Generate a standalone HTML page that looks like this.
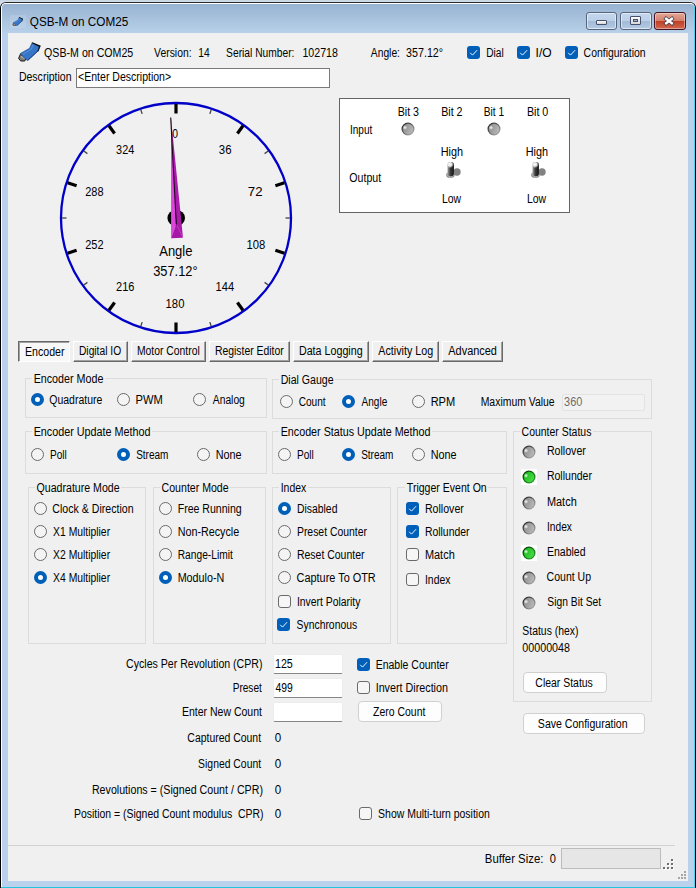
<!DOCTYPE html>
<html lang="en"><head><meta charset="utf-8"><title>QSB-M on COM25</title>
<style>
html,body{margin:0;padding:0}
body{width:696px;height:888px;position:relative;overflow:hidden;background:#d9e1ea;font-family:"Liberation Sans",sans-serif;font-size:12px;color:#000}
.abs{position:absolute}
div,span,i,svg{position:absolute;box-sizing:border-box}
.above{left:0;top:0;width:696px;height:3px;background:linear-gradient(#c9d5e2,#d6e1ee)}
.win{left:0;top:2px;width:696px;height:886px;background:#b9d1ea;border:1px solid #000;border-top-color:#2a2a2a;border-radius:6px 6px 0 0}
.winhi{left:0;top:0;right:0;bottom:0;border:1px solid #fff;border-radius:5px 5px 0 0;border-bottom:none;border-right:none}
.title{left:1px;top:1px;right:1px;height:30px;background:linear-gradient(#98b3d1,#b9d1ea);border-radius:4px 4px 0 0}
.cyb{left:1px;top:887px;width:695px;height:1px;background:#22c6e0}
.cyr{left:694px;top:6px;width:1px;height:882px;background:#4fd0ee}
.blk{left:695px;top:8px;width:1px;height:880px;background:#000}
.client{left:8px;top:33px;width:680px;height:848px;background:#f0f0f0}
.ticonbg{left:10px;top:15px;width:16px;height:13px;background:rgba(255,255,255,.12)}
.t{left:0;top:0;white-space:pre;transform-origin:0 0;line-height:13.8px;font-size:12px}
.cbtn{top:12px;height:18px;border:1px solid #56657c;border-radius:3px;background:linear-gradient(#c3d6ec 0,#bcd0e8 48%,#a3bbd8 52%,#b4cae4 100%);box-shadow:inset 0 0 0 1px rgba(255,255,255,.55)}
.cbtn.close{border-color:#431422;background:linear-gradient(#e3a898 0,#d4806c 48%,#bf4024 52%,#d0684e 100%);box-shadow:inset 0 0 0 1px rgba(255,255,255,.4)}
.gl-min{left:9px;top:7px;width:11px;height:5px;background:linear-gradient(#fcfcfc,#d6d6d6);border:1px solid #46506a;border-radius:1px}
.gl-max{left:9px;top:3px;width:11px;height:9px;background:linear-gradient(#fcfcfc,#d6d6d6);border:1px solid #46506a;border-radius:1px}
.gl-max i{left:2px;top:2px;width:5px;height:3px;background:#9fb8d6;border:1px solid #46506a}
.tbox-old{background:#fff;border:1px solid #7a7a7a}
.iopanel{background:#fff;border:1px solid #646464}
.chk{width:13px;height:13px;border:1px solid #6a6a6a;border-radius:3px;background:#f6f6f6}
.chk.on{border:none;background:#005fb8}
.chk svg{left:0;top:0}
.rad{width:13px;height:13px;border:1px solid #6a6a6a;border-radius:50%;background:#f4f4f4}
.rad.on{border:4px solid #005fb8;background:#fff}
.led{width:13px;height:13px;border-radius:50%;background:radial-gradient(circle at 28% 30%,#fff 0,#d8d8d8 9%,#a4a4a4 28%,#9c9c9c 60%,#b0b0b0 100%);box-shadow:inset 1px 1px 1px 0 #2c2c2c,inset -1px -1px 1px 0 #8a8a8a}
.led.g{background:radial-gradient(circle at 28% 30%,#eaffea 0,#7be87b 10%,#22c222 30%,#16b416 65%,#2ed02e 100%);box-shadow:inset 1px 1px 1px 0 #0a5a0a,inset -1px -1px 1px 0 #1a9a1a}
.ledbg{width:16px;height:16px;background:#fff}
.tab{background:#f0f0f0;border-top:1px solid #fff;border-left:1px solid #fff;border-right:1px solid #696969;border-bottom:1px solid #696969}
.tab i{left:0;top:0;right:0;bottom:0;border-right:1px solid #a0a0a0;border-bottom:1px solid #a0a0a0}
.tab.sel{background:#f8f8f8;border-top:1px solid #696969;border-left:1px solid #696969;border-right:1px solid #fff;border-bottom:1px solid #fff}
.tab.sel i{border:none;border-top:1px solid #a0a0a0;border-left:1px solid #a0a0a0}
.grp{border:1px solid #dcdcdc}
.glab{background:#f0f0f0}
.tbox{background:#fff;border:1px solid #ececec;border-bottom:1px solid #858585;border-radius:2px}
.tbox-dis{background:#f2f2f2;border:1px solid #e3e3e3;border-radius:2px}
.btn{background:#fdfdfd;border:1px solid #d0d0d0;border-radius:4px}
.sline{height:1px;background:#d2d2d2}
.prog{background:#e6e6e6;border:1px solid #bcbcbc}
.gd{width:2px;height:2px}

</style></head>
<body>
<svg class="abs" style="left:0;top:0" width="0" height="0"><defs>
<linearGradient id="lrn" x1="0.1" y1="0.1" x2="0.9" y2="0.9"><stop offset="0" stop-color="#2c2c2c"/><stop offset="0.5" stop-color="#686868"/><stop offset="1" stop-color="#a6a6a6"/></linearGradient>
<linearGradient id="lfn" x1="0" y1="0.3" x2="1" y2="0.7"><stop offset="0" stop-color="#8a8a8a"/><stop offset="1" stop-color="#bcbcbc"/></linearGradient>
<linearGradient id="lrg" x1="0.1" y1="0.1" x2="0.9" y2="0.9"><stop offset="0" stop-color="#063c06"/><stop offset="0.5" stop-color="#0d6e0d"/><stop offset="1" stop-color="#1d9e1d"/></linearGradient>
<linearGradient id="lfg" x1="0" y1="0.2" x2="1" y2="0.8"><stop offset="0" stop-color="#12b812"/><stop offset="1" stop-color="#52de52"/></linearGradient>
<radialGradient id="lhl"><stop offset="0" stop-color="#fff" stop-opacity="0.95"/><stop offset="0.45" stop-color="#fff" stop-opacity="0.55"/><stop offset="1" stop-color="#fff" stop-opacity="0"/></radialGradient>
</defs></svg>
<div class="above"></div>
<div class="win"><div class="winhi"></div><div class="title"></div></div>
<div class="cyb"></div><div class="cyr"></div><div class="blk"></div>
<div class="client"></div>
<div class="ticonbg"></div>
<svg class="abs" style="left:12.1px;top:16.7px" width="11.28" height="9.399999999999999" viewBox="17 42 24 20">
<polygon points="18.6,58.4 20.4,54.2 26.3,58 24.6,61.1 20.6,60.9" fill="#807c78" stroke="#141414" stroke-width="1"/>
<path d="M20.9 56.2 L24.9 58.6" stroke="#b9b4ae" stroke-width="1.1" fill="none"/>
<polygon points="20.3,53.6 29.6,48.3 31.9,43.3 39.9,46.5 37.9,51 27.7,60.4 25.3,58.9" fill="#3776c6" stroke="#1c4c94" stroke-width="0.7" stroke-linejoin="round"/>
<path d="M37.9 51 L27.7 60.4" stroke="#173f80" stroke-width="1" fill="none"/>
<polygon points="31.5,43 32.4,42.2 40.8,45.8 40.1,47.3" fill="#080808"/>
<polygon points="40.2,47 38.5,51.5 37.3,51.2 39,46.4" fill="#0e1c34"/>
<path d="M22.6 54.3 L31 49.5 L33.3 44.6" fill="none" stroke="#5c96de" stroke-width="0.9"/>
</svg>
<svg class="abs" style="left:17px;top:42px" width="24" height="20" viewBox="17 42 24 20">
<polygon points="18.6,58.4 20.4,54.2 26.3,58 24.6,61.1 20.6,60.9" fill="#807c78" stroke="#141414" stroke-width="1"/>
<path d="M20.9 56.2 L24.9 58.6" stroke="#b9b4ae" stroke-width="1.1" fill="none"/>
<polygon points="20.3,53.6 29.6,48.3 31.9,43.3 39.9,46.5 37.9,51 27.7,60.4 25.3,58.9" fill="#3776c6" stroke="#1c4c94" stroke-width="0.7" stroke-linejoin="round"/>
<path d="M37.9 51 L27.7 60.4" stroke="#173f80" stroke-width="1" fill="none"/>
<polygon points="31.5,43 32.4,42.2 40.8,45.8 40.1,47.3" fill="#080808"/>
<polygon points="40.2,47 38.5,51.5 37.3,51.2 39,46.4" fill="#0e1c34"/>
<path d="M22.6 54.3 L31 49.5 L33.3 44.6" fill="none" stroke="#5c96de" stroke-width="0.9"/>
</svg>
<div class="cbtn" style="left:586px;width:31px"><div class="cb-top"></div><div class="gl-min"></div></div>
<div class="cbtn" style="left:620px;width:32px"><div class="cb-top"></div><div class="gl-max"><i></i></div></div>
<div class="cbtn close" style="left:654px;width:32px"><div class="cb-top"></div>
<svg class="abs" style="left:7.4px;top:2.5px" width="14" height="10" viewBox="0 0 14 10"><path d="M2.6 1.5 L11.4 8.5 M11.4 1.5 L2.6 8.5" stroke="#3f3f52" stroke-width="3.7" stroke-linecap="butt"/><path d="M3.2 2.0 L10.8 8.0 M10.8 2.0 L3.2 8.0" stroke="#fff" stroke-width="2.3" stroke-linecap="butt"/></svg></div>
<div class="tbox-old" style="left:76px;top:68px;width:254px;height:20px"></div>
<div class="chk on" style="left:467px;top:46px"><svg width="13" height="13" viewBox="0 0 13 13"><path d="M3.5 7.1 L5.5 9.1 L9.8 4.5" fill="none" stroke="#fff" stroke-width="0.95" stroke-linecap="round" stroke-linejoin="round"/></svg></div>
<div class="chk on" style="left:517px;top:46px"><svg width="13" height="13" viewBox="0 0 13 13"><path d="M3.5 7.1 L5.5 9.1 L9.8 4.5" fill="none" stroke="#fff" stroke-width="0.95" stroke-linecap="round" stroke-linejoin="round"/></svg></div>
<div class="chk on" style="left:565px;top:46px"><svg width="13" height="13" viewBox="0 0 13 13"><path d="M3.5 7.1 L5.5 9.1 L9.8 4.5" fill="none" stroke="#fff" stroke-width="0.95" stroke-linecap="round" stroke-linejoin="round"/></svg></div>
<svg class="abs" style="left:0;top:0" width="696" height="888" viewBox="0 0 696 888"><circle cx="176" cy="218" r="115" fill="none" stroke="#0000c8" stroke-width="2.3"/><line x1="176.00" y1="104.00" x2="176.00" y2="113.50" stroke="#000" stroke-width="3.2"/><line x1="211.23" y1="109.58" x2="209.84" y2="113.86" stroke="#444" stroke-width="1.3"/><line x1="243.01" y1="125.77" x2="237.42" y2="133.46" stroke="#000" stroke-width="3.2"/><line x1="268.23" y1="150.99" x2="264.59" y2="153.64" stroke="#444" stroke-width="1.3"/><line x1="284.42" y1="182.77" x2="275.39" y2="185.71" stroke="#000" stroke-width="3.2"/><line x1="290.00" y1="218.00" x2="285.50" y2="218.00" stroke="#444" stroke-width="1.3"/><line x1="284.42" y1="253.23" x2="275.39" y2="250.29" stroke="#000" stroke-width="3.2"/><line x1="268.23" y1="285.01" x2="264.59" y2="282.36" stroke="#444" stroke-width="1.3"/><line x1="243.01" y1="310.23" x2="237.42" y2="302.54" stroke="#000" stroke-width="3.2"/><line x1="211.23" y1="326.42" x2="209.84" y2="322.14" stroke="#444" stroke-width="1.3"/><line x1="176.00" y1="332.00" x2="176.00" y2="322.50" stroke="#000" stroke-width="3.2"/><line x1="140.77" y1="326.42" x2="142.16" y2="322.14" stroke="#444" stroke-width="1.3"/><line x1="108.99" y1="310.23" x2="114.58" y2="302.54" stroke="#000" stroke-width="3.2"/><line x1="83.77" y1="285.01" x2="87.41" y2="282.36" stroke="#444" stroke-width="1.3"/><line x1="67.58" y1="253.23" x2="76.61" y2="250.29" stroke="#000" stroke-width="3.2"/><line x1="62.00" y1="218.00" x2="66.50" y2="218.00" stroke="#444" stroke-width="1.3"/><line x1="67.58" y1="182.77" x2="76.61" y2="185.71" stroke="#000" stroke-width="3.2"/><line x1="83.77" y1="150.99" x2="87.41" y2="153.64" stroke="#444" stroke-width="1.3"/><line x1="108.99" y1="125.77" x2="114.58" y2="133.46" stroke="#000" stroke-width="3.2"/><line x1="140.77" y1="109.58" x2="142.16" y2="113.86" stroke="#444" stroke-width="1.3"/><ellipse cx="176.2" cy="218" rx="8.8" ry="8" fill="#000"/><polygon points="171,118 171.1,238.3 176.3,224" fill="#dc46dc"/><polygon points="171,118 176.3,224 183,237.7" fill="#ac1cac"/><polygon points="176.3,224 171.1,238.3 183,237.7" fill="#a818a8"/><line x1="170.7" y1="117.5" x2="176.3" y2="224" stroke="#1a001a" stroke-width="1.1"/></svg>
<div class="iopanel" style="left:339px;top:98px;width:231px;height:115px"></div>
<svg class="abs" style="left:400.1px;top:121px" width="16" height="16" viewBox="-8 -8 16 16"><circle r="5.85" fill="url(#lfn)" stroke="url(#lrn)" stroke-width="1.3"/><circle cx="-3" cy="-1.4" r="2.3" fill="url(#lhl)"/></svg>
<svg class="abs" style="left:486.3px;top:121px" width="16" height="16" viewBox="-8 -8 16 16"><circle r="5.85" fill="url(#lfn)" stroke="url(#lrn)" stroke-width="1.3"/><circle cx="-3" cy="-1.4" r="2.3" fill="url(#lhl)"/></svg>
<svg class="abs" style="left:444px;top:160px" width="20" height="20" viewBox="0 0 20 20">
<defs><linearGradient id="tg444" x1="0" y1="0" x2="1" y2="0"><stop offset="0" stop-color="#b4b4b4"/><stop offset="0.18" stop-color="#7a7a7a"/><stop offset="0.45" stop-color="#3c3c3c"/><stop offset="0.85" stop-color="#1c1c1c"/><stop offset="1" stop-color="#2e2e2e"/></linearGradient>
<radialGradient id="tv444" gradientUnits="userSpaceOnUse" cx="6" cy="4.3" r="3.9"><stop offset="0" stop-color="#fff" stop-opacity="1"/><stop offset="0.5" stop-color="#f2f2f2" stop-opacity="0.9"/><stop offset="1" stop-color="#ccc" stop-opacity="0"/></radialGradient>
<filter id="tb444" x="-30%" y="-30%" width="160%" height="160%"><feGaussianBlur stdDeviation="0.45"/></filter></defs>
<circle cx="13" cy="12" r="3.7" fill="#828282" filter="url(#tb444)"/>
<ellipse cx="6.4" cy="14.9" rx="4.3" ry="2.9" fill="#8e8e8e" filter="url(#tb444)"/>
<ellipse cx="6.5" cy="14.7" rx="3.3" ry="2" fill="#b8b8b8"/>
<rect x="3.4" y="2" width="6.6" height="14.2" rx="3.2" fill="url(#tg444)"/>
<rect x="3.4" y="2" width="6.6" height="14.2" rx="3.2" fill="url(#tv444)"/>
</svg>
<svg class="abs" style="left:529px;top:160px" width="20" height="20" viewBox="0 0 20 20">
<defs><linearGradient id="tg529" x1="0" y1="0" x2="1" y2="0"><stop offset="0" stop-color="#b4b4b4"/><stop offset="0.18" stop-color="#7a7a7a"/><stop offset="0.45" stop-color="#3c3c3c"/><stop offset="0.85" stop-color="#1c1c1c"/><stop offset="1" stop-color="#2e2e2e"/></linearGradient>
<radialGradient id="tv529" gradientUnits="userSpaceOnUse" cx="6" cy="4.3" r="3.9"><stop offset="0" stop-color="#fff" stop-opacity="1"/><stop offset="0.5" stop-color="#f2f2f2" stop-opacity="0.9"/><stop offset="1" stop-color="#ccc" stop-opacity="0"/></radialGradient>
<filter id="tb529" x="-30%" y="-30%" width="160%" height="160%"><feGaussianBlur stdDeviation="0.45"/></filter></defs>
<circle cx="13" cy="12" r="3.7" fill="#828282" filter="url(#tb529)"/>
<ellipse cx="6.4" cy="14.9" rx="4.3" ry="2.9" fill="#8e8e8e" filter="url(#tb529)"/>
<ellipse cx="6.5" cy="14.7" rx="3.3" ry="2" fill="#b8b8b8"/>
<rect x="3.4" y="2" width="6.6" height="14.2" rx="3.2" fill="url(#tg529)"/>
<rect x="3.4" y="2" width="6.6" height="14.2" rx="3.2" fill="url(#tv529)"/>
</svg>
<div class="tab sel" style="left:18px;top:341px;width:52px;height:21px"><i></i></div>
<div class="tab" style="left:73px;top:341px;width:55px;height:21px"><i></i></div>
<div class="tab" style="left:131px;top:341px;width:75px;height:21px"><i></i></div>
<div class="tab" style="left:209px;top:341px;width:81px;height:21px"><i></i></div>
<div class="tab" style="left:293px;top:341px;width:76px;height:21px"><i></i></div>
<div class="tab" style="left:372px;top:341px;width:67px;height:21px"><i></i></div>
<div class="tab" style="left:442px;top:341px;width:61px;height:21px"><i></i></div>
<div class="grp" style="left:25px;top:378px;width:242px;height:39.5px"></div>
<div class="glab" style="left:32.25px;top:373px;width:72.75px;height:13px"></div>
<div class="grp" style="left:272px;top:379px;width:380px;height:39.5px"></div>
<div class="glab" style="left:279.25px;top:374.25px;width:56.0px;height:13px"></div>
<div class="grp" style="left:25px;top:431px;width:242px;height:42.5px"></div>
<div class="glab" style="left:32.25px;top:426.25px;width:119.75px;height:13px"></div>
<div class="grp" style="left:272px;top:431px;width:235px;height:42.5px"></div>
<div class="glab" style="left:279.25px;top:426.25px;width:152.75px;height:13px"></div>
<div class="grp" style="left:513px;top:431px;width:139px;height:270.5px"></div>
<div class="glab" style="left:519.75px;top:426.25px;width:73.5px;height:13px"></div>
<div class="grp" style="left:28px;top:487px;width:118px;height:156.5px"></div>
<div class="glab" style="left:34.75px;top:482px;width:86.5px;height:13px"></div>
<div class="grp" style="left:153px;top:487px;width:113px;height:156.5px"></div>
<div class="glab" style="left:159.75px;top:482px;width:70.5px;height:13px"></div>
<div class="grp" style="left:272px;top:487px;width:119px;height:156.5px"></div>
<div class="glab" style="left:279.25px;top:482px;width:29.0px;height:13px"></div>
<div class="grp" style="left:397px;top:487px;width:110px;height:156.5px"></div>
<div class="glab" style="left:404.75px;top:482px;width:83.5px;height:13px"></div>
<div class="rad on" style="left:31.0px;top:393.0px"></div>
<div class="rad" style="left:116.9px;top:393.0px"></div>
<div class="rad" style="left:192.9px;top:393.0px"></div>
<div class="rad" style="left:280.0px;top:395.25px"></div>
<div class="rad on" style="left:342.0px;top:395.25px"></div>
<div class="rad" style="left:411.9px;top:395.25px"></div>
<div class="tbox-dis" style="left:562px;top:393.5px;width:83px;height:17px"></div>
<div class="rad" style="left:31.0px;top:448.0px"></div>
<div class="rad on" style="left:117.0px;top:448.0px"></div>
<div class="rad" style="left:196.9px;top:448.0px"></div>
<div class="rad" style="left:277.6px;top:448.0px"></div>
<div class="rad on" style="left:342.0px;top:448.0px"></div>
<div class="rad" style="left:411.9px;top:448.0px"></div>
<div class="rad" style="left:34.0px;top:502.25px"></div>
<div class="rad" style="left:34.0px;top:525.0px"></div>
<div class="rad" style="left:34.0px;top:548.0px"></div>
<div class="rad on" style="left:34.0px;top:571.0px"></div>
<div class="rad" style="left:158.75px;top:502.25px"></div>
<div class="rad" style="left:158.75px;top:525.0px"></div>
<div class="rad" style="left:158.75px;top:548.0px"></div>
<div class="rad on" style="left:158.75px;top:571.0px"></div>
<div class="rad on" style="left:277.9px;top:502.25px"></div>
<div class="rad" style="left:277.9px;top:525.0px"></div>
<div class="rad" style="left:277.9px;top:548.0px"></div>
<div class="rad" style="left:277.9px;top:571.0px"></div>
<div class="chk" style="left:278px;top:595.25px"></div>
<div class="chk on" style="left:277px;top:618px"><svg width="13" height="13" viewBox="0 0 13 13"><path d="M3.5 7.1 L5.5 9.1 L9.8 4.5" fill="none" stroke="#fff" stroke-width="0.95" stroke-linecap="round" stroke-linejoin="round"/></svg></div>
<div class="chk on" style="left:406px;top:502px"><svg width="13" height="13" viewBox="0 0 13 13"><path d="M3.5 7.1 L5.5 9.1 L9.8 4.5" fill="none" stroke="#fff" stroke-width="0.95" stroke-linecap="round" stroke-linejoin="round"/></svg></div>
<div class="chk on" style="left:406px;top:525.25px"><svg width="13" height="13" viewBox="0 0 13 13"><path d="M3.5 7.1 L5.5 9.1 L9.8 4.5" fill="none" stroke="#fff" stroke-width="0.95" stroke-linecap="round" stroke-linejoin="round"/></svg></div>
<div class="chk" style="left:406px;top:548px"></div>
<div class="chk" style="left:406px;top:573px"></div>
<svg class="abs" style="left:521.25px;top:444px" width="16" height="16" viewBox="-8 -8 16 16"><circle r="5.85" fill="url(#lfn)" stroke="url(#lrn)" stroke-width="1.3"/><circle cx="-3" cy="-1.4" r="2.3" fill="url(#lhl)"/></svg>
<div class="ledbg" style="left:521.0px;top:468.6px"></div>
<svg class="abs" style="left:521.25px;top:469px" width="16" height="16" viewBox="-8 -8 16 16"><circle r="5.85" fill="url(#lfg)" stroke="url(#lrg)" stroke-width="1.3"/><circle cx="-3" cy="-1.4" r="2.3" fill="url(#lhl)"/></svg>
<svg class="abs" style="left:521.25px;top:495px" width="16" height="16" viewBox="-8 -8 16 16"><circle r="5.85" fill="url(#lfn)" stroke="url(#lrn)" stroke-width="1.3"/><circle cx="-3" cy="-1.4" r="2.3" fill="url(#lhl)"/></svg>
<svg class="abs" style="left:521.25px;top:520px" width="16" height="16" viewBox="-8 -8 16 16"><circle r="5.85" fill="url(#lfn)" stroke="url(#lrn)" stroke-width="1.3"/><circle cx="-3" cy="-1.4" r="2.3" fill="url(#lhl)"/></svg>
<div class="ledbg" style="left:521.0px;top:544.6px"></div>
<svg class="abs" style="left:521.25px;top:545px" width="16" height="16" viewBox="-8 -8 16 16"><circle r="5.85" fill="url(#lfg)" stroke="url(#lrg)" stroke-width="1.3"/><circle cx="-3" cy="-1.4" r="2.3" fill="url(#lhl)"/></svg>
<svg class="abs" style="left:521.25px;top:570px" width="16" height="16" viewBox="-8 -8 16 16"><circle r="5.85" fill="url(#lfn)" stroke="url(#lrn)" stroke-width="1.3"/><circle cx="-3" cy="-1.4" r="2.3" fill="url(#lhl)"/></svg>
<svg class="abs" style="left:521.25px;top:595px" width="16" height="16" viewBox="-8 -8 16 16"><circle r="5.85" fill="url(#lfn)" stroke="url(#lrn)" stroke-width="1.3"/><circle cx="-3" cy="-1.4" r="2.3" fill="url(#lhl)"/></svg>
<div class="btn" style="left:523px;top:672px;width:84px;height:20.5px"></div>
<div class="btn" style="left:523px;top:713.25px;width:122px;height:20.5px"></div>
<div class="btn" style="left:358.25px;top:701.25px;width:83.5px;height:20.5px"></div>
<div class="tbox" style="left:272.6px;top:654.4px;width:70.6px;height:19.4px"></div>
<div class="tbox" style="left:272.6px;top:678.4px;width:70.6px;height:19.4px"></div>
<div class="tbox" style="left:272.6px;top:702.4px;width:70.6px;height:19.4px"></div>
<div class="chk on" style="left:357px;top:658.25px"><svg width="13" height="13" viewBox="0 0 13 13"><path d="M3.5 7.1 L5.5 9.1 L9.8 4.5" fill="none" stroke="#fff" stroke-width="0.95" stroke-linecap="round" stroke-linejoin="round"/></svg></div>
<div class="chk" style="left:357px;top:681.25px"></div>
<div class="chk" style="left:359.25px;top:807px"></div>
<div class="sline" style="left:8px;top:845px;width:667px"></div>
<div class="prog" style="left:561px;top:848px;width:100px;height:21px"></div>
<i class="gd" style="left:672px;top:860px;background:#fff"></i><i class="gd" style="left:668px;top:864px;background:#fff"></i><i class="gd" style="left:672px;top:864px;background:#fff"></i><i class="gd" style="left:664px;top:868px;background:#fff"></i><i class="gd" style="left:668px;top:868px;background:#fff"></i><i class="gd" style="left:672px;top:868px;background:#fff"></i><i class="gd" style="left:671px;top:859px;background:#6e6e6e"></i><i class="gd" style="left:667px;top:863px;background:#6e6e6e"></i><i class="gd" style="left:671px;top:863px;background:#6e6e6e"></i><i class="gd" style="left:663px;top:867px;background:#6e6e6e"></i><i class="gd" style="left:667px;top:867px;background:#6e6e6e"></i><i class="gd" style="left:671px;top:867px;background:#6e6e6e"></i><i class="gd" style="left:684px;top:871px;background:#a6a6a6"></i><i class="gd" style="left:681px;top:874px;background:#a6a6a6"></i><i class="gd" style="left:684px;top:874px;background:#a6a6a6"></i><i class="gd" style="left:678px;top:877px;background:#a6a6a6"></i><i class="gd" style="left:681px;top:877px;background:#a6a6a6"></i><i class="gd" style="left:684px;top:877px;background:#a6a6a6"></i>
<span class="t" style="transform:translate(29.81px,16.00px) scaleX(0.9779)">QSB-M on COM25</span>
<span class="t" style="transform:translate(44.11px,47.00px) scaleX(0.8852)">QSB-M on COM25</span>
<span class="t" style="transform:translate(154.12px,47.00px) scaleX(0.8635)">Version:</span>
<span class="t" style="transform:translate(198.19px,47.00px) scaleX(0.8583)">14</span>
<span class="t" style="transform:translate(226.12px,47.00px) scaleX(0.8541)">Serial Number:</span>
<span class="t" style="transform:translate(302.42px,47.00px) scaleX(0.8844)">102718</span>
<span class="t" style="transform:translate(370.80px,47.00px) scaleX(0.8576)">Angle:</span>
<span class="t" style="transform:translate(406.11px,47.00px) scaleX(0.8894)">357.12°</span>
<span class="t" style="transform:translate(486.21px,47.00px) scaleX(0.8447)">Dial</span>
<span class="t" style="transform:translate(535.55px,47.00px) scaleX(1.0034)">I/O</span>
<span class="t" style="transform:translate(583.62px,47.00px) scaleX(0.8686)">Configuration</span>
<span class="t" style="transform:translate(18.92px,71.00px) scaleX(0.8764)">Description</span>
<span class="t" style="transform:translate(78.11px,71.00px) scaleX(0.8767)">&lt;Enter Description&gt;</span>
<span class="t" style="transform:translate(172.29px,127.00px) scaleX(0.8250);font-size:12.5px;line-height:14.37px">0</span>
<span class="t" style="transform:translate(218.85px,143.00px) scaleX(0.9137);font-size:12.5px;line-height:14.37px">36</span>
<span class="t" style="transform:translate(247.81px,185.00px) scaleX(1.0591);font-size:12.5px;line-height:14.37px">72</span>
<span class="t" style="transform:translate(246.44px,238.00px) scaleX(0.9013);font-size:12.5px;line-height:14.37px">108</span>
<span class="t" style="transform:translate(215.57px,280.00px) scaleX(0.8897);font-size:12.5px;line-height:14.37px">144</span>
<span class="t" style="transform:translate(165.60px,297.00px) scaleX(0.9013);font-size:12.5px;line-height:14.37px">180</span>
<span class="t" style="transform:translate(116.10px,280.00px) scaleX(0.8785);font-size:12.5px;line-height:14.37px">216</span>
<span class="t" style="transform:translate(85.22px,238.00px) scaleX(0.8785);font-size:12.5px;line-height:14.37px">252</span>
<span class="t" style="transform:translate(85.22px,185.00px) scaleX(0.8785);font-size:12.5px;line-height:14.37px">288</span>
<span class="t" style="transform:translate(116.10px,143.00px) scaleX(0.8675);font-size:12.5px;line-height:14.37px">324</span>
<span class="t" style="transform:translate(159.20px,243.00px) scaleX(0.9291);font-size:14px;line-height:16.10px">Angle</span>
<span class="t" style="transform:translate(153.14px,263.00px) scaleX(0.9181);font-size:14px;line-height:16.10px">357.12°</span>
<span class="t" style="transform:translate(397.66px,106.00px) scaleX(0.8911)">Bit 3</span>
<span class="t" style="transform:translate(441.16px,106.00px) scaleX(0.8911)">Bit 2</span>
<span class="t" style="transform:translate(483.70px,106.00px) scaleX(0.8467)">Bit 1</span>
<span class="t" style="transform:translate(526.91px,106.00px) scaleX(0.8911)">Bit 0</span>
<span class="t" style="transform:translate(349.96px,124.00px) scaleX(0.8369)">Input</span>
<span class="t" style="transform:translate(349.36px,172.00px) scaleX(0.8817)">Output</span>
<span class="t" style="transform:translate(440.65px,146.00px) scaleX(0.9043)">High</span>
<span class="t" style="transform:translate(525.65px,146.00px) scaleX(0.9043)">High</span>
<span class="t" style="transform:translate(441.93px,193.00px) scaleX(0.8714)">Low</span>
<span class="t" style="transform:translate(526.93px,193.00px) scaleX(0.8714)">Low</span>
<span class="t" style="transform:translate(24.91px,346.00px) scaleX(0.8862)">Encoder</span>
<span class="t" style="transform:translate(78.95px,345.00px) scaleX(0.8545)">Digital IO</span>
<span class="t" style="transform:translate(136.94px,345.00px) scaleX(0.8634)">Motor Control</span>
<span class="t" style="transform:translate(214.93px,345.00px) scaleX(0.8665)">Register Editor</span>
<span class="t" style="transform:translate(298.91px,345.00px) scaleX(0.8928)">Data Logging</span>
<span class="t" style="transform:translate(378.30px,345.00px) scaleX(0.8934)">Activity Log</span>
<span class="t" style="transform:translate(448.30px,345.00px) scaleX(0.9105)">Advanced</span>
<span class="t" style="transform:translate(33.66px,373.00px) scaleX(0.8928)">Encoder Mode</span>
<span class="t" style="transform:translate(280.67px,374.00px) scaleX(0.8812)">Dial Gauge</span>
<span class="t" style="transform:translate(33.65px,426.00px) scaleX(0.8990)">Encoder Update Method</span>
<span class="t" style="transform:translate(280.66px,426.00px) scaleX(0.8947)">Encoder Status Update Method</span>
<span class="t" style="transform:translate(521.61px,426.00px) scaleX(0.8713)">Counter Status</span>
<span class="t" style="transform:translate(36.61px,482.00px) scaleX(0.8823)">Quadrature Mode</span>
<span class="t" style="transform:translate(161.61px,482.00px) scaleX(0.8807)">Counter Mode</span>
<span class="t" style="transform:translate(280.68px,482.00px) scaleX(0.8690)">Index</span>
<span class="t" style="transform:translate(406.83px,482.00px) scaleX(0.8783)">Trigger Event On</span>
<span class="t" style="transform:translate(49.36px,394.00px) scaleX(0.8711)">Quadrature</span>
<span class="t" style="transform:translate(135.62px,394.00px) scaleX(0.9284)">PWM</span>
<span class="t" style="transform:translate(212.80px,394.00px) scaleX(0.8575)">Analog</span>
<span class="t" style="transform:translate(298.63px,396.00px) scaleX(0.8429)">Count</span>
<span class="t" style="transform:translate(361.55px,396.00px) scaleX(0.8364)">Angle</span>
<span class="t" style="transform:translate(430.63px,396.00px) scaleX(0.9212)">RPM</span>
<span class="t" style="transform:translate(480.68px,396.00px) scaleX(0.8689)">Maximum Value</span>
<span class="t" style="transform:translate(564.09px,396.00px) scaleX(0.9105);color:#6d6d6d">360</span>
<span class="t" style="transform:translate(49.96px,449.00px) scaleX(0.8384)">Poll</span>
<span class="t" style="transform:translate(136.13px,449.00px) scaleX(0.8347)">Stream</span>
<span class="t" style="transform:translate(215.65px,449.00px) scaleX(0.9009)">None</span>
<span class="t" style="transform:translate(296.96px,449.00px) scaleX(0.8384)">Poll</span>
<span class="t" style="transform:translate(361.13px,449.00px) scaleX(0.8347)">Stream</span>
<span class="t" style="transform:translate(430.65px,449.00px) scaleX(0.9009)">None</span>
<span class="t" style="transform:translate(52.36px,503.00px) scaleX(0.8821)">Clock &amp; Direction</span>
<span class="t" style="transform:translate(53.08px,526.00px) scaleX(0.8634)">X1 Multiplier</span>
<span class="t" style="transform:translate(53.08px,549.00px) scaleX(0.8634)">X2 Multiplier</span>
<span class="t" style="transform:translate(53.08px,572.00px) scaleX(0.8634)">X4 Multiplier</span>
<span class="t" style="transform:translate(177.67px,503.00px) scaleX(0.8810)">Free Running</span>
<span class="t" style="transform:translate(177.65px,526.00px) scaleX(0.8967)">Non-Recycle</span>
<span class="t" style="transform:translate(177.70px,549.00px) scaleX(0.8518)">Range-Limit</span>
<span class="t" style="transform:translate(177.65px,572.00px) scaleX(0.8960)">Modulo-N</span>
<span class="t" style="transform:translate(296.93px,503.00px) scaleX(0.8678)">Disabled</span>
<span class="t" style="transform:translate(296.93px,526.00px) scaleX(0.8686)">Preset Counter</span>
<span class="t" style="transform:translate(296.93px,549.00px) scaleX(0.8728)">Reset Counter</span>
<span class="t" style="transform:translate(296.60px,572.00px) scaleX(0.9078)">Capture To OTR</span>
<span class="t" style="transform:translate(296.93px,596.00px) scaleX(0.8657)">Invert Polarity</span>
<span class="t" style="transform:translate(296.62px,619.00px) scaleX(0.8635)">Synchronous</span>
<span class="t" style="transform:translate(424.92px,503.00px) scaleX(0.8842)">Rollover</span>
<span class="t" style="transform:translate(424.93px,526.00px) scaleX(0.8667)">Rollunder</span>
<span class="t" style="transform:translate(424.89px,549.00px) scaleX(0.9129)">Match</span>
<span class="t" style="transform:translate(424.93px,574.00px) scaleX(0.8690)">Index</span>
<span class="t" style="transform:translate(546.92px,445.00px) scaleX(0.8842)">Rollover</span>
<span class="t" style="transform:translate(546.92px,470.00px) scaleX(0.8766)">Rollunder</span>
<span class="t" style="transform:translate(546.89px,496.00px) scaleX(0.9129)">Match</span>
<span class="t" style="transform:translate(546.95px,521.00px) scaleX(0.8513)">Index</span>
<span class="t" style="transform:translate(546.92px,546.00px) scaleX(0.8769)">Enabled</span>
<span class="t" style="transform:translate(546.61px,571.00px) scaleX(0.8754)">Count Up</span>
<span class="t" style="transform:translate(547.37px,596.00px) scaleX(0.8562)">Sign Bit Set</span>
<span class="t" style="transform:translate(522.37px,625.00px) scaleX(0.8669)">Status (hex)</span>
<span class="t" style="transform:translate(522.35px,642.00px) scaleX(0.8909)">00000048</span>
<span class="t" style="transform:translate(535.37px,677.00px) scaleX(0.8700)">Clear Status</span>
<span class="t" style="transform:translate(537.86px,718.00px) scaleX(0.8789)">Save Configuration</span>
<span class="t" style="transform:translate(373.08px,706.00px) scaleX(0.8711)">Zero Count</span>
<span class="t" style="transform:translate(126.11px,658.00px) scaleX(0.8814)">Cycles Per Revolution (CPR)</span>
<span class="t" style="transform:translate(232.71px,682.00px) scaleX(0.8385)">Preset</span>
<span class="t" style="transform:translate(181.92px,706.00px) scaleX(0.8759)">Enter New Count</span>
<span class="t" style="transform:translate(187.36px,732.00px) scaleX(0.8700)">Captured Count</span>
<span class="t" style="transform:translate(198.12px,758.00px) scaleX(0.8657)">Signed Count</span>
<span class="t" style="transform:translate(91.91px,784.00px) scaleX(0.8889)">Revolutions = (Signed Count / CPR)</span>
<span class="t" style="transform:translate(73.93px,808.00px) scaleX(0.8706)">Position = (Signed Count modulus  CPR)</span>
<span class="t" style="transform:translate(274.82px,732.00px) scaleX(0.9652)">0</span>
<span class="t" style="transform:translate(274.82px,758.00px) scaleX(0.9652)">0</span>
<span class="t" style="transform:translate(274.82px,784.00px) scaleX(0.9652)">0</span>
<span class="t" style="transform:translate(274.82px,808.00px) scaleX(0.9652)">0</span>
<span class="t" style="transform:translate(274.91px,658.00px) scaleX(0.8946)">125</span>
<span class="t" style="transform:translate(275.59px,682.00px) scaleX(0.8597)">499</span>
<span class="t" style="transform:translate(375.67px,659.00px) scaleX(0.8760)">Enable Counter</span>
<span class="t" style="transform:translate(375.65px,682.00px) scaleX(0.8962)">Invert Direction</span>
<span class="t" style="transform:translate(378.11px,808.00px) scaleX(0.8722)">Show Multi-turn position</span>
<span class="t" style="transform:translate(484.85px,853.00px) scaleX(0.9464)">Buffer Size:</span>
<span class="t" style="transform:translate(549.84px,853.00px) scaleX(0.9217)">0</span>
</body></html>
